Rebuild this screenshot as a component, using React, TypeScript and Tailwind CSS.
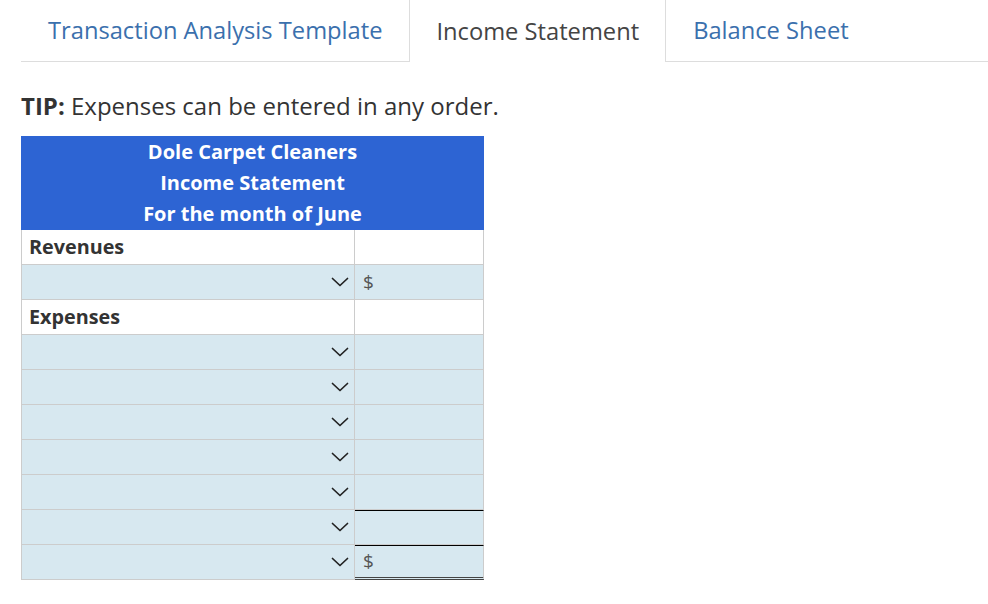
import React from "react";

const Chevron = () => (
  <svg width="18" height="10" viewBox="0 0 18 10" fill="none" className="block">
    <polyline points="1.5,1.5 9,8.5 16.5,1.5" stroke="#222" strokeWidth="1.7" strokeLinecap="round" strokeLinejoin="round" />
  </svg>
);

type Row = { kind: "label"; text: string } | { kind: "select"; dollar?: boolean; rightTop?: "black"; rightBottom?: "double" };

const rows: Row[] = [
  { kind: "label", text: "Revenues" },
  { kind: "select", dollar: true },
  { kind: "label", text: "Expenses" },
  { kind: "select" },
  { kind: "select" },
  { kind: "select" },
  { kind: "select" },
  { kind: "select" },
  { kind: "select", rightTop: "black" },
  { kind: "select", dollar: true, rightTop: "black", rightBottom: "double" },
];

export default function App() {
  return (
    <div className="min-h-[604px] w-[988px] bg-white pl-[21px] text-[#333]" style={{ fontFamily: '"Open Sans", sans-serif' }}>
      <div className="flex h-[62px] items-stretch">
        <div className="flex items-center border-b border-[#dddddd] px-[27px] pt-[1px] text-[23.7px] text-[#3b70ad]">
          Transaction Analysis Template
        </div>
        <div className="flex items-center border-x border-[#dddddd] px-[26px] pt-[1px] text-[23.7px] text-[#444]">
          Income Statement
        </div>
        <div className="flex flex-1 items-center border-b border-[#dddddd] px-[27px] pt-[1px] text-[23.7px] text-[#3b70ad]">
          Balance Sheet
        </div>
      </div>
      <div className="mt-[28px] text-[24px] leading-[32px] text-[#333]">
        <span className="font-bold">TIP:</span> Expenses can be entered in any order.
      </div>
      <div className="mt-[14px] w-[463px]">
        <div className="flex h-[94px] flex-col items-center bg-[#2d64d3] text-[20px] font-bold leading-[31px] text-white">
          <div>Dole Carpet Cleaners</div>
          <div>Income Statement</div>
          <div>For the month of June</div>
        </div>
        <div className="border-l border-[#cccccc]">
          {rows.map((r, i) =>
            r.kind === "label" ? (
              <div key={i} className="flex h-[35px] border-b border-[#cccccc] bg-white">
                <div className="flex w-[333px] items-center border-r border-[#cccccc] pl-[7px] text-[19.8px] font-bold text-[#333]">{r.text}</div>
                <div className="flex-1 border-r border-[#cccccc]" />
              </div>
            ) : (
              <div key={i} className="flex h-[35px]">
                <div className="flex w-[333px] items-center justify-end border-b border-r border-[#cccccc] bg-[#d7e8f0] pr-[5px]">
                  <Chevron />
                </div>
                <div
                  className={`relative flex flex-1 items-center border-r border-[#cccccc] bg-[#d7e8f0] pl-[8px] text-[19px] text-[#555] ${
                    r.rightBottom === "double" ? "border-b-[3px] border-b-[#444] border-double" : "border-b border-[#cccccc]"
                  } ${r.rightTop === "black" ? "border-t border-t-black" : ""}`}
                >
                  {r.dollar ? "$" : ""}
                </div>
              </div>
            )
          )}
        </div>
      </div>
    </div>
  );
}
